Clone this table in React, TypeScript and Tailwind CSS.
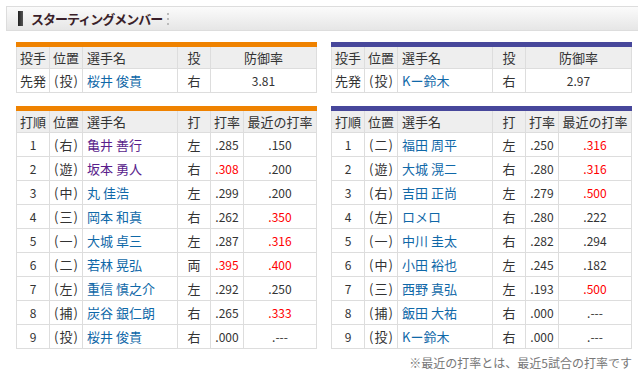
type Pitcher = { role: string; pos: string; name: string; hand: string; era: string }
type Batter = {
  no: string
  pos: string
  name: string
  visited?: boolean
  hand: string
  avg: string
  avgHot?: boolean
  recent: string
  recentHot?: boolean
}

const left = {
  bar: "border-t-[#ef8200]",
  pitcher: { role: "先発", pos: "投", name: "桜井 俊貴", hand: "右", era: "3.81" } as Pitcher,
  batters: [
    { no: "1", pos: "右", name: "亀井 善行", visited: true, hand: "左", avg: ".285", recent: ".150" },
    { no: "2", pos: "遊", name: "坂本 勇人", visited: true, hand: "右", avg: ".308", avgHot: true, recent: ".200" },
    { no: "3", pos: "中", name: "丸 佳浩", hand: "左", avg: ".299", recent: ".200" },
    { no: "4", pos: "三", name: "岡本 和真", hand: "右", avg: ".262", recent: ".350", recentHot: true },
    { no: "5", pos: "一", name: "大城 卓三", hand: "左", avg: ".287", recent: ".316", recentHot: true },
    { no: "6", pos: "二", name: "若林 晃弘", hand: "両", avg: ".395", avgHot: true, recent: ".400", recentHot: true },
    { no: "7", pos: "左", name: "重信 慎之介", hand: "左", avg: ".292", recent: ".250" },
    { no: "8", pos: "捕", name: "炭谷 銀仁朗", hand: "右", avg: ".265", recent: ".333", recentHot: true },
    { no: "9", pos: "投", name: "桜井 俊貴", hand: "右", avg: ".000", recent: ".---" },
  ] as Batter[],
}

const right = {
  bar: "border-t-[#47479b]",
  pitcher: { role: "先発", pos: "投", name: "Kー鈴木", hand: "右", era: "2.97" } as Pitcher,
  batters: [
    { no: "1", pos: "二", name: "福田 周平", hand: "左", avg: ".250", recent: ".316", recentHot: true },
    { no: "2", pos: "遊", name: "大城 滉二", hand: "右", avg: ".280", recent: ".316", recentHot: true },
    { no: "3", pos: "右", name: "吉田 正尚", hand: "左", avg: ".279", recent: ".500", recentHot: true },
    { no: "4", pos: "左", name: "ロメロ", hand: "右", avg: ".280", recent: ".222" },
    { no: "5", pos: "一", name: "中川 圭太", hand: "右", avg: ".282", recent: ".294" },
    { no: "6", pos: "中", name: "小田 裕也", hand: "左", avg: ".245", recent: ".182" },
    { no: "7", pos: "三", name: "西野 真弘", hand: "左", avg: ".193", recent: ".500", recentHot: true },
    { no: "8", pos: "捕", name: "飯田 大祐", hand: "右", avg: ".000", recent: ".---" },
    { no: "9", pos: "投", name: "Kー鈴木", hand: "右", avg: ".000", recent: ".---" },
  ] as Batter[],
}

const cell = "border border-[#dddddd] h-[24px] p-0 font-normal"

// 位置 like "(投)" with narrow parens spaced out
const Pos = ({ p }: { p: string }) => (
  <span className="inline-flex items-center gap-[1px]">
    <span>(</span>
    <span>{p}</span>
    <span>)</span>
  </span>
)

const PitcherTable = ({ bar, p }: { bar: string; p: Pitcher }) => {
  return (
    <table className={`w-[300px] table-fixed border-collapse border-t-[5px] ${bar}`}>
      <colgroup>
        <col className="w-[33px]" />
        <col className="w-[33px]" />
        <col className="w-[95px]" />
        <col className="w-[33px]" />
        <col className="w-[106px]" />
      </colgroup>
      <thead>
        <tr className="bg-[#eeeeee]">
          <th className={`${cell} text-center`}>投手</th>
          <th className={`${cell} text-center`}>位置</th>
          <th className={`${cell} text-left pl-[4px]`}>選手名</th>
          <th className={`${cell} text-center`}>投</th>
          <th className={`${cell} text-center`}>防御率</th>
        </tr>
      </thead>
      <tbody>
        <tr>
          <td className={`${cell} text-center`}>{p.role}</td>
          <td className={`${cell} text-center`}>
            <Pos p={p.pos} />
          </td>
          <td className={`${cell} pl-[4px] text-[#0f68a8]`}>{p.name}</td>
          <td className={`${cell} text-center`}>{p.hand}</td>
          <td className={`${cell} text-center text-[12px]`}>{p.era}</td>
        </tr>
      </tbody>
    </table>
  )
}

const LineupTable = ({ bar, batters }: { bar: string; batters: Batter[] }) => {
  return (
    <table className={`w-[300px] table-fixed border-collapse border-t-[5px] ${bar}`}>
      <colgroup>
        <col className="w-[33px]" />
        <col className="w-[33px]" />
        <col className="w-[95px]" />
        <col className="w-[33px]" />
        <col className="w-[33px]" />
        <col className="w-[73px]" />
      </colgroup>
      <thead>
        <tr className="bg-[#eeeeee]">
          <th className={`${cell} text-center`}>打順</th>
          <th className={`${cell} text-center`}>位置</th>
          <th className={`${cell} text-left pl-[4px]`}>選手名</th>
          <th className={`${cell} text-center`}>打</th>
          <th className={`${cell} text-center`}>打率</th>
          <th className={`${cell} text-center`}>最近の打率</th>
        </tr>
      </thead>
      <tbody>
        {batters.map((b) => (
          <tr key={b.no}>
            <td className={`${cell} text-center text-[12px]`}>{b.no}</td>
            <td className={`${cell} text-center`}>
              <Pos p={b.pos} />
            </td>
            <td className={`${cell} pl-[4px] ${b.visited ? "text-[#5a1e8c]" : "text-[#0f68a8]"}`}>{b.name}</td>
            <td className={`${cell} text-center`}>{b.hand}</td>
            <td className={`${cell} text-center text-[12px] ${b.avgHot ? "text-[#ff0000]" : ""}`}>{b.avg}</td>
            <td className={`${cell} text-center text-[12px] ${b.recentHot ? "text-[#ff0000]" : ""}`}>{b.recent}</td>
          </tr>
        ))}
      </tbody>
    </table>
  )
}

const Side = ({ team }: { team: typeof left }) => {
  return (
    <div className="flex flex-col gap-[13px]">
      <PitcherTable bar={team.bar} p={team.pitcher} />
      <LineupTable bar={team.bar} batters={team.batters} />
    </div>
  )
}

export default function App() {
  return (
    <div
      className="w-[638px] h-[383px] overflow-hidden bg-white text-[13px] leading-none text-[#333333]"
      style={{ fontFamily: '"Noto Sans CJK JP", "Noto Sans", sans-serif' }}
    >
      <div className="ml-[6px] mt-[6px] w-[640px] h-[25px] border border-[#dddddd] bg-gradient-to-b from-[#fbfbfb] to-[#e6e6e6] flex items-center">
        <span className="ml-[11px] w-[5px] h-[15px] bg-gradient-to-r from-[#222222] to-[#555555]" />
        <span className="ml-[8px] text-[13px] font-bold text-[#3a1f2a] tracking-[-1px]">スターティングメンバー</span>
        <span className="ml-[5px] flex flex-col gap-[3px]">
          <span className="w-[2px] h-[2px] bg-[#bbbbbb]" />
          <span className="w-[2px] h-[2px] bg-[#bbbbbb]" />
          <span className="w-[2px] h-[2px] bg-[#bbbbbb]" />
        </span>
      </div>
      <div className="mt-[11px] ml-[16px] flex gap-[14px]">
        <Side team={left} />
        <div className="flex flex-col">
          <Side team={right} />
          <p className="mt-[8px] text-right text-[12px] text-[#777777]">※最近の打率とは、最近5試合の打率です</p>
        </div>
      </div>
    </div>
  )
}
